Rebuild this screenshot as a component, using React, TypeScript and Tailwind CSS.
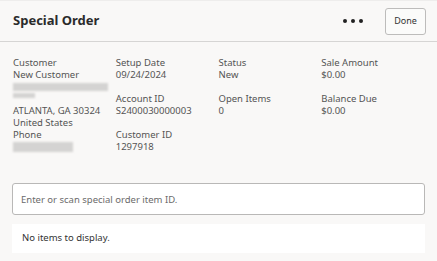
const Field = ({ label, value }: { label: string; value: string }) => (
  <div>
    <div>{label}</div>
    <div>{value}</div>
  </div>
);

const Blur = ({ className }: { className: string }) => (
  <div className={`bg-[#d4d3d2] blur-[1px] ${className}`} />
);

const App = () => {
  return (
    <div className="h-[261px] w-[437px] overflow-hidden bg-[#f9f8f7] font-['Noto_Sans',sans-serif] text-[#545454]">
      {/* Header */}
      <header className="flex h-[42px] items-center border-t border-b border-t-[#eeedec] border-b-[#d6d5d4] pl-[13px] pr-[11px]">
        <h1 className="flex-1 text-[13px] font-bold text-[#2b2b2b]">Special Order</h1>
        <div className="mr-[22px] flex gap-[4px]">
          <span className="h-[4px] w-[4px] rounded-full bg-[#222]" />
          <span className="h-[4px] w-[4px] rounded-full bg-[#222]" />
          <span className="h-[4px] w-[4px] rounded-full bg-[#222]" />
        </div>
        <button className="h-[27px] w-[41px] rounded-[3px] border border-[#bdbcbb] bg-[#fbfbfa] text-[9px] text-[#333]">
          Done
        </button>
      </header>

      {/* Details */}
      <div className="grid grid-cols-4 px-[13px] pt-[15px] text-[9.5px] leading-[12px]">
        <div>
          <div>Customer</div>
          <div>New Customer</div>
          <div className="flex h-[12px] items-center">
            <Blur className="h-[8px] w-[95px]" />
          </div>
          <div className="flex h-[12px] items-start">
            <Blur className="h-[5px] w-[22px]" />
          </div>
          <div>ATLANTA, GA 30324</div>
          <div>United States</div>
          <div>Phone</div>
          <div className="flex h-[12px] items-center">
            <Blur className="h-[10px] w-[60px]" />
          </div>
        </div>
        <div className="flex flex-col gap-[12px]">
          <Field label="Setup Date" value="09/24/2024" />
          <Field label="Account ID" value="S2400030000003" />
          <Field label="Customer ID" value="1297918" />
        </div>
        <div className="flex flex-col gap-[12px]">
          <Field label="Status" value="New" />
          <Field label="Open Items" value="0" />
        </div>
        <div className="flex flex-col gap-[12px]">
          <Field label="Sale Amount" value="$0.00" />
          <Field label="Balance Due" value="$0.00" />
        </div>
      </div>

      {/* Item entry */}
      <div className="mt-[30px] px-[12px]">
        <input
          className="h-[32px] w-full rounded-[3px] border border-[#b9b8b7] bg-white px-[8px] text-[9.5px] outline-none placeholder:text-[#6b6b6b]"
          placeholder="Enter or scan special order item ID."
        />
        <div className="mt-[9px] flex h-[29px] items-center bg-white px-[10px] text-[9.5px] text-[#333]">
          No items to display.
        </div>
      </div>
    </div>
  );
};

export default App;
